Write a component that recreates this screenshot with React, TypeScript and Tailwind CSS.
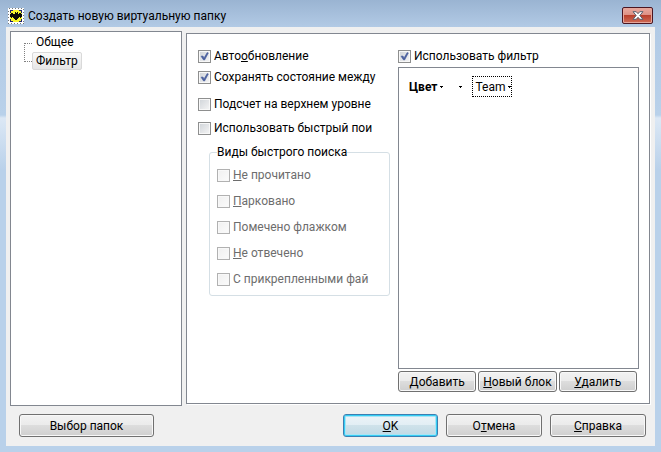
import type { ReactNode } from "react";

function Check({
  id,
  checked = false,
  disabled = false,
  children,
}: {
  id: string;
  checked?: boolean;
  disabled?: boolean;
  children: ReactNode;
}) {
  return (
    <div className={`flex h-4 items-center gap-[3px] ${disabled ? "text-[#6d6d6d]" : "text-black"}`}>
      <span className="relative size-[13px] shrink-0">
        <input
          id={id}
          type="checkbox"
          defaultChecked={checked}
          disabled={disabled}
          className={`peer block size-[13px] appearance-none border bg-linear-to-br shadow-[inset_0_0_0_1px_#f8f8f8] ${
            disabled ? "border-[#b1b1b1] from-[#f0f0f0] to-[#fbfbfb]" : "border-[#8e8f8f] from-[#cfd3d8] to-[#f6f6f6]"
          }`}
        />
        <svg viewBox="0 0 13 13" className="pointer-events-none absolute inset-0 hidden size-[13px] peer-checked:block">
          <path d="M3 6.2 L5 6 L6 8 L9.2 2.6 L10.3 3 L6.6 10 L5.6 10 Z" fill="#4a5f9e" stroke="#4a5f9e" strokeWidth=".6" />
        </svg>
      </span>
      <label htmlFor={id} className="whitespace-nowrap">
        {children}
      </label>
    </div>
  );
}

function PushButton({ className, primary = false, children }: { className: string; primary?: boolean; children: ReactNode }) {
  return (
    <button
      type="button"
      className={`rounded-[3px] border text-center whitespace-nowrap ${
        primary
          ? "border-[#3c7fb1] bg-[linear-gradient(#edf4f8_0%,#e2eef4_48%,#cfe2ea_50%,#bfd9e4_100%)] shadow-[inset_0_0_0_1px_#35cdf4,inset_0_0_0_2px_#a9e4f5]"
          : "border-[#707070] bg-[linear-gradient(#f2f2f2_0%,#ebebeb_48%,#dddddd_50%,#cfcfcf_100%)] shadow-[inset_0_0_0_1px_#f8f8f8]"
      } ${className}`}
    >
      {children}
    </button>
  );
}

function BatIcon() {
  return (
    <svg viewBox="0 0 16 16" className="size-4" shapeRendering="crispEdges" aria-hidden="true">
      <rect width="16" height="16" fill="#fff" />
      <rect x=".5" y=".5" width="15" height="15" fill="none" stroke="#777" strokeDasharray="1 2" />
      <rect x="2" y="2" width="12" height="12" fill="#20206e" />
      <path d="M5 2h6v1h2v2h1v6h-1v2h-2v1H5v-1H3v-2H2V5h1V3h2z" fill="#f7f52c" />
      <path d="M3 5h2v1h2V4h1v1h1V4h1v2h1V5h2v1h1v3h-1v1h-1V9h-1v1h-1v1H9v1H7v-1H6v-1H5V9H4v1H3V9H2V6h1z" fill="#090909" />
    </svg>
  );
}

function Arrow() {
  return (
    <svg viewBox="0 0 3 2" className="h-[2px] w-[3px]" shapeRendering="crispEdges" aria-hidden="true">
      <path d="M0 0h3v1H2v1H1V1H0z" />
    </svg>
  );
}

export default function App() {
  return (
    <main className="flex min-h-screen flex-col bg-[linear-gradient(#9ab4d2_0px,#b2cae5_27px,#b9d1ea_115px,#dce8f5_118px,#b9d1ea_170px)] px-[6px] pb-[6px] font-[Roboto,'Noto_Sans',sans-serif] text-[12px] leading-4 text-black">
      <header className="flex h-[27px] items-center gap-1 pt-1 pl-[2px]">
        <BatIcon />
        <h1 className="flex-1 whitespace-nowrap">Создать новую виртуальную папку</h1>
        <button
          type="button"
          aria-label="Закрыть"
          className="mr-[2px] flex h-[17px] w-[31px] items-center justify-center rounded-[2px] border border-[#4b1622] bg-[linear-gradient(#e9aaa0_0%,#dc8f83_48%,#b9402d_50%,#cf6c57_100%)] shadow-[inset_0_0_0_1px_#e5a69b]"
        >
          <svg viewBox="0 0 12 9" className="h-[9px] w-3" aria-hidden="true">
            <path
              d="M1 .7h3.2L6 2.7 7.8.7H11L7.8 4.5 11 8.3H7.8L6 6.3 4.2 8.3H1l3.2-3.8z"
              fill="#fff"
              stroke="#59606e"
              strokeWidth="1"
            />
          </svg>
        </button>
      </header>

      <div className="flex flex-1 flex-col bg-[#f0f0f0]">
        <div className="flex flex-1 gap-1 pt-1 pr-[5px] pl-1">
          <nav className="w-[172px] shrink-0 border border-[#828790] bg-white pt-[2px] pl-[13px]">
            <div className="flex">
              <div className="mt-[9px] h-[19px] w-2 border-y border-l border-dotted border-[#808080]" />
              <ul>
                <li className="h-[18px] pl-1">Общее</li>
                <li className="h-[18px] rounded-[2px] border border-[#d9d9d9] bg-linear-to-b from-[#fafafa] to-[#e6e6e6] px-[3px]">
                  Фильтр
                </li>
              </ul>
            </div>
          </nav>

          <section className="mt-[2px] mb-[2px] grid flex-1 grid-cols-[192fr_241fr] gap-2 border border-[#828790] bg-white pr-[10px] pb-[11px] pl-[11px] shadow-[1px_1px_0_#fff]">
            <div className="min-w-0 pt-[14px]">
              <div className="flex flex-col gap-[5px]">
                <Check id="auto" checked>
                  Авто<u>о</u>бновление
                </Check>
                <Check id="keep" checked>
                  Сохранять состояние между
                </Check>
              </div>
              <div className="mt-[11px] flex flex-col gap-2">
                <Check id="count">Подсчет на верхнем уровне</Check>
                <Check id="quick">Использовать быстрый пои</Check>
              </div>
              <fieldset className="mt-2 ml-[11px] rounded-[3px] border border-[#d5dfe5] pb-2 pl-[7px]">
                <legend className="whitespace-nowrap">Виды быстрого поиска</legend>
                <div className="mt-[7px] flex flex-col gap-[10px]">
                  <Check id="unread" disabled>
                    <u>Н</u>е прочитано
                  </Check>
                  <Check id="parked" disabled>
                    <u>П</u>арковано
                  </Check>
                  <Check id="flagged" disabled>
                    Помечено флажком
                  </Check>
                  <Check id="unanswered" disabled>
                    <u>Н</u>е отвечено
                  </Check>
                  <Check id="attached" disabled>
                    С прикрепленными фай
                  </Check>
                </div>
              </fieldset>
            </div>

            <div className="flex min-w-0 flex-col pt-[14px]">
              <Check id="filter" checked>
                Использовать фильтр
              </Check>
              <div className="mt-[3px] flex-1 border border-[#828790] bg-white pt-2 pl-[10px]">
                <div className="flex h-[21px] items-center">
                  <button type="button" className="flex items-center gap-[3px] font-bold">
                    Цвет <Arrow />
                  </button>
                  <button type="button" aria-label="Условие" className="ml-4 flex h-4 items-center">
                    <Arrow />
                  </button>
                  <button
                    type="button"
                    className="ml-[10px] flex h-[21px] items-center gap-[3px] border border-dotted border-black pl-[2px]"
                  >
                    Team <Arrow />
                  </button>
                </div>
              </div>
              <div className="mt-[2px] grid grid-cols-3 gap-[2px] pr-[2px]">
                <PushButton className="h-[21px]">
                  <u>Д</u>обавить
                </PushButton>
                <PushButton className="h-[21px]">
                  <u>Н</u>овый блок
                </PushButton>
                <PushButton className="h-[21px]">
                  <u>У</u>далить
                </PushButton>
              </div>
            </div>
          </section>
        </div>

        <footer className="flex gap-2 pt-2 pr-[9px] pb-[9px] pl-[13px]">
          <PushButton className="mr-auto h-[23px] w-[135px]">Выбор папок</PushButton>
          <PushButton primary className="h-[23px] w-[95px]">
            <u>O</u>K
          </PushButton>
          <PushButton className="h-[23px] w-24">
            О<u>т</u>мена
          </PushButton>
          <PushButton className="h-[23px] w-24">
            <u>С</u>правка
          </PushButton>
        </footer>
      </div>
    </main>
  );
}
